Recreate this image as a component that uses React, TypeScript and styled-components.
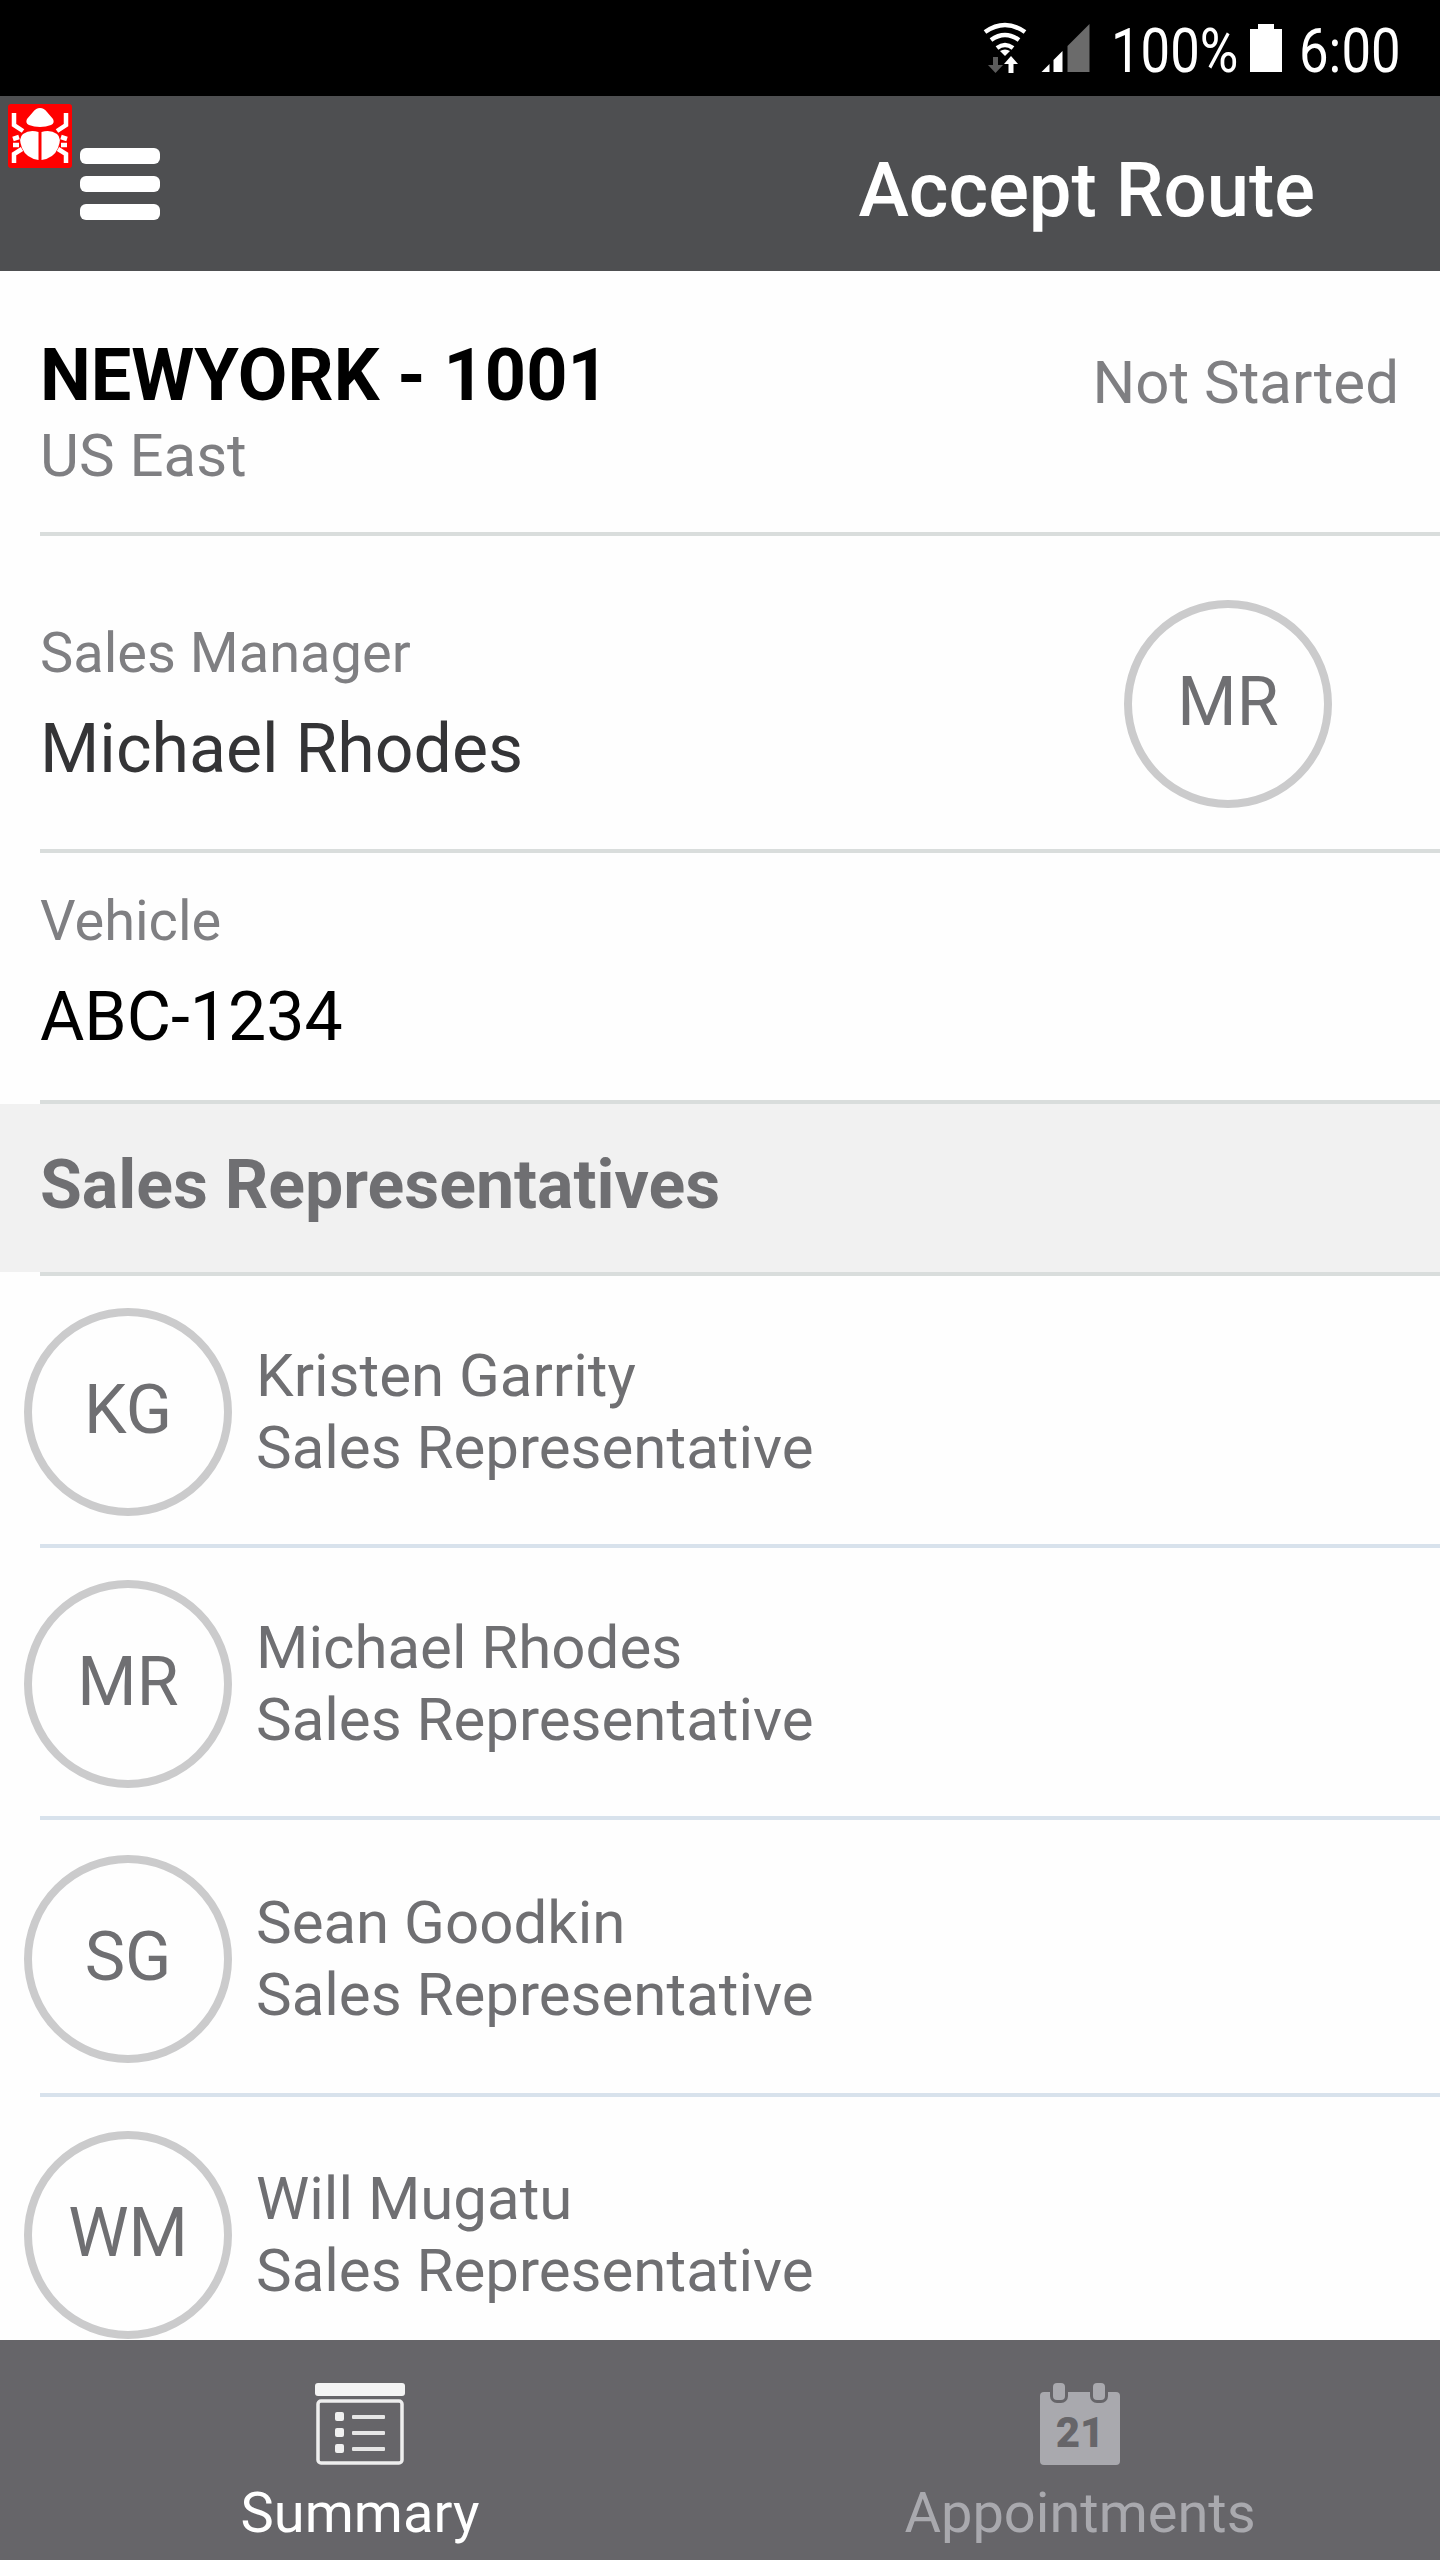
import { createGlobalStyle } from "styled-components";
import styled from "styled-components";

const GlobalStyle = createGlobalStyle`
  html, body {
    margin: 0;
    padding: 0;
    background: #fefefe;
  }
  * {
    box-sizing: border-box;
  }
`;

const Screen = styled.div`
  position: relative;
  display: flex;
  flex-direction: column;
  width: 1440px;
  height: 2560px;
  overflow: hidden;
  background: #fefefe;
  font-family: Roboto, "Liberation Sans", sans-serif;
`;

const StatusBar = styled.div`
  display: flex;
  align-items: center;
  justify-content: flex-end;
  height: 96px;
  padding-right: 38px;
  background: #000;
  color: #fff;
`;

const StatusText = styled.span<{ $width: number }>`
  display: block;
  width: ${props => props.$width}px;
  padding-top: 5px;
  font-size: 62px;
  font-weight: 400;
  line-height: 91px;
  white-space: nowrap;
  transform: scaleX(0.85);
  transform-origin: left center;
`;

const StatusIcon = styled.svg<{ $left?: number; $right?: number }>`
  display: block;
  flex-shrink: 0;
  margin-left: ${props => props.$left ?? 0}px;
  margin-right: ${props => props.$right ?? 0}px;
`;

const AppBar = styled.header`
  display: flex;
  align-items: center;
  justify-content: space-between;
  height: 175px;
  padding: 0 125px 0 80px;
  background: #4e4f51;
`;

const Hamburger = styled.div`
  display: flex;
  flex-direction: column;
  gap: 12px;
  width: 80px;
`;

const HamburgerBar = styled.span`
  display: block;
  height: 16px;
  border-radius: 6px;
  background: #fff;
`;

const AppTitle = styled.h1`
  margin: 0;
  padding-top: 12px;
  color: #fff;
  font-size: 76px;
  font-weight: 500;
  line-height: 84px;
`;

const BugBadge = styled.svg`
  position: absolute;
  top: 104px;
  left: 8px;
`;

const Content = styled.main`
  flex: 1;
  min-height: 0;
  overflow: hidden;
`;

const Divider = styled.div<{ $tint?: boolean }>`
  height: 4px;
  margin-left: 40px;
  background: ${props => (props.$tint ? "#d8e2ec" : "#d9dddc")};
`;

const RouteHead = styled.section`
  display: flex;
  justify-content: space-between;
  height: 261px;
  padding: 68px 41px 0 40px;
`;

const RouteName = styled.div`
  color: #000;
  font-size: 72px;
  font-weight: 700;
  line-height: 74px;
`;

const RouteRegion = styled.div`
  margin-top: 10px;
  color: #7f7f82;
  font-size: 60px;
  line-height: 66px;
`;

const RouteState = styled.div`
  padding-top: 10px;
  color: #7f7f82;
  font-size: 60px;
  line-height: 68px;
`;

const ManagerRow = styled.section`
  display: flex;
  align-items: flex-start;
  justify-content: space-between;
  height: 313px;
  padding: 84px 108px 0 40px;
`;

const FieldLabel = styled.div`
  color: #7f7f82;
  font-size: 56px;
  line-height: 66px;
`;

const FieldValue = styled.div<{ $strong?: boolean }>`
  margin-top: 30px;
  color: ${props => (props.$strong ? "#000" : "#343436")};
  font-size: 68px;
  line-height: 66px;
`;

const ManagerAvatar = styled.div`
  margin-top: -20px;
`;

const VehicleRow = styled.section`
  height: 247px;
  padding: 35px 40px 0;
`;

const SectionBand = styled.div`
  display: flex;
  align-items: center;
  height: 168px;
  padding: 0 0 6px 40px;
  background: #f1f1f1;
  color: #6f6f72;
  font-size: 68px;
  font-weight: 700;
`;

const RepRow = styled.div<{ $height: number }>`
  display: flex;
  align-items: center;
  gap: 24px;
  height: ${props => props.$height}px;
  padding: 4px 0 0 24px;
`;

const Avatar = styled.div`
  display: flex;
  align-items: center;
  justify-content: center;
  flex-shrink: 0;
  width: 208px;
  height: 208px;
  padding-bottom: 4px;
  border: 8px solid #cbcbcc;
  border-radius: 50%;
  color: #6f6f72;
  font-size: 68px;
`;

const RepText = styled.div`
  color: #6f6f72;
  font-size: 60px;
  line-height: 72px;
`;

const TabBar = styled.nav`
  display: grid;
  grid-template-columns: 1fr 1fr;
  height: 220px;
  background: #666569;
`;

const Tab = styled.div<{ $active?: boolean }>`
  display: flex;
  flex-direction: column;
  align-items: center;
  padding-top: 43px;
  color: ${props => (props.$active ? "#fff" : "#a9a9ae")};
  font-size: 56px;
  line-height: 66px;
`;

const TabIcon = styled.svg`
  display: block;
  margin-bottom: 15px;
`;

const reps = [
  { initials: "KG", name: "Kristen Garrity", height: 268 },
  { initials: "MR", name: "Michael Rhodes", height: 268 },
  { initials: "SG", name: "Sean Goodkin", height: 273 },
  { initials: "WM", name: "Will Mugatu", height: 272 },
];

function WifiIcon() {
  return (
    <StatusIcon width="44" height="52" viewBox="0 0 44 52">
      <g fill="none" stroke="#fff" strokeWidth="4.5">
        <path d="M2 10 Q22 -4 42 10" />
        <path d="M8 18 Q22 8 36 18" />
        <path d="M14 26 Q22 20 30 26" />
      </g>
      <path d="M17 29 Q22 26 27 29 L22 34 Z" fill="#fff" />
      <path d="M10 35 h5 v8 h5 l-7.500 8 l-7.500 -8 h5 z" fill="#5c5c5c" />
      <path d="M28 34 l7 8 h-4.500 v9 h-5 v-9 h-4.500 z" fill="#fff" />
    </StatusIcon>
  );
}

function SignalIcon() {
  return (
    <StatusIcon width="49" height="48" viewBox="0 0 48 48" $left={14} $right={21}>
      <path d="M0 48 L8 40 V48 Z" fill="#fff" />
      <path d="M12 48 V36 L21 27 V48 Z" fill="#fff" />
      <path d="M26 48 V22 L48 0 V48 Z" fill="#6b6b6b" />
    </StatusIcon>
  );
}

function BatteryIcon() {
  return (
    <StatusIcon width="32" height="48" viewBox="0 0 32 48" $left={14} $right={17}>
      <path d="M8 0 H24 V5 H32 V48 H0 V5 H8 Z" fill="#fff" />
    </StatusIcon>
  );
}

function BugIcon() {
  return (
    <BugBadge width="64" height="64" viewBox="0 0 64 64">
      <rect width="64" height="64" rx="3" fill="#ff0000" />
      <path d="M32 4 Q36 4 39 8 L45 15 Q47 19 43 21 Q38 23 32 23 Q26 23 21 21 Q17 19 19 15 L25 8 Q28 4 32 4 Z" fill="#fff" />
      <path d="M30.500 28 V56 Q18 54 14 44 Q10 34 15 30 Q22 25 30.500 28 Z" fill="#fff" />
      <path d="M33.500 28 V56 Q46 54 50 44 Q54 34 49 30 Q42 25 33.500 28 Z" fill="#fff" />
      <g fill="none" stroke="#fff" strokeWidth="4.500">
        <path d="M6 9 V21 L15 27" />
        <path d="M58 9 V21 L49 27" />
        <path d="M5 35 L11 33" />
        <path d="M59 35 L53 33" />
        <path d="M5 41 H11" />
        <path d="M59 41 H53" />
        <path d="M6 59 V50 L14 45" />
        <path d="M58 59 V50 L50 45" />
      </g>
    </BugBadge>
  );
}

function SummaryIcon() {
  return (
    <TabIcon width="90" height="82" viewBox="0 0 90 82">
      <rect x="0" y="0" width="90" height="13" rx="3" fill="#f4f4f4" />
      <rect x="3" y="18" width="84" height="62" rx="3" fill="none" stroke="#eeeeee" strokeWidth="3.500" />
      <rect x="20" y="29" width="9" height="9" rx="2" fill="#f0f0f0" />
      <rect x="20" y="45" width="9" height="9" rx="2" fill="#f0f0f0" />
      <rect x="20" y="61" width="9" height="9" rx="2" fill="#f0f0f0" />
      <rect x="37" y="32" width="33" height="4" rx="1" fill="#e6e6e6" />
      <rect x="37" y="48" width="33" height="4" rx="1" fill="#e6e6e6" />
      <rect x="37" y="64" width="33" height="4" rx="1" fill="#e6e6e6" />
    </TabIcon>
  );
}

function CalendarIcon() {
  return (
    <TabIcon width="80" height="82" viewBox="0 0 80 82">
      <rect x="0" y="9" width="80" height="73" rx="4" fill="#a9a9ae" />
      <rect x="10" y="-2" width="18" height="22" rx="7" fill="#666569" />
      <rect x="50" y="-2" width="18" height="22" rx="7" fill="#666569" />
      <rect x="13" y="0" width="12" height="17" rx="4" fill="#a9a9ae" />
      <rect x="53" y="0" width="12" height="17" rx="4" fill="#a9a9ae" />
      <text x="40" y="64" textAnchor="middle" fontFamily="Roboto, sans-serif" fontSize="42" fontWeight="900" fill="#666569">21</text>
    </TabIcon>
  );
}

function App() {
  return (
    <Screen>
      <GlobalStyle />
      <StatusBar>
        <WifiIcon />
        <SignalIcon />
        <StatusText $width={125}>100%</StatusText>
        <BatteryIcon />
        <StatusText $width={103}>6:00</StatusText>
      </StatusBar>
      <AppBar>
        <Hamburger>
          <HamburgerBar />
          <HamburgerBar />
          <HamburgerBar />
        </Hamburger>
        <AppTitle>Accept Route</AppTitle>
      </AppBar>
      <BugIcon />
      <Content>
        <RouteHead>
          <div>
            <RouteName>NEWYORK - 1001</RouteName>
            <RouteRegion>US East</RouteRegion>
          </div>
          <RouteState>Not Started</RouteState>
        </RouteHead>
        <Divider />
        <ManagerRow>
          <div>
            <FieldLabel>Sales Manager</FieldLabel>
            <FieldValue>Michael Rhodes</FieldValue>
          </div>
          <ManagerAvatar>
            <Avatar>MR</Avatar>
          </ManagerAvatar>
        </ManagerRow>
        <Divider />
        <VehicleRow>
          <FieldLabel>Vehicle</FieldLabel>
          <FieldValue $strong>ABC-1234</FieldValue>
        </VehicleRow>
        <Divider />
        <SectionBand>Sales Representatives</SectionBand>
        <Divider />
        {reps.map((rep, index) => (
          <div key={rep.initials}>
            <RepRow $height={rep.height}>
              <Avatar>{rep.initials}</Avatar>
              <RepText>
                {rep.name}
                <br />
                Sales Representative
              </RepText>
            </RepRow>
            {index < reps.length - 1 && <Divider $tint />}
          </div>
        ))}
      </Content>
      <TabBar>
        <Tab $active>
          <SummaryIcon />
          Summary
        </Tab>
        <Tab>
          <CalendarIcon />
          Appointments
        </Tab>
      </TabBar>
    </Screen>
  );
}

export default App;
